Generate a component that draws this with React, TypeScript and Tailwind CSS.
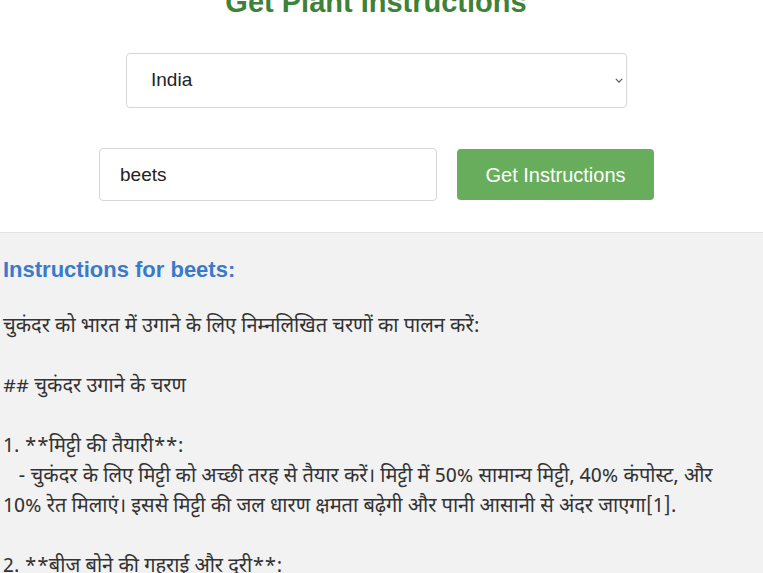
import { useState } from "react";

const text = `चुकंदर को भारत में उगाने के लिए निम्नलिखित चरणों का पालन करें:

## चुकंदर उगाने के चरण

1. **मिट्टी की तैयारी**:
   - चुकंदर के लिए मिट्टी को अच्छी तरह से तैयार करें। मिट्टी में 50% सामान्य मिट्टी, 40% कंपोस्ट, और 10% रेत मिलाएं। इससे मिट्टी की जल धारण क्षमता बढ़ेगी और पानी आसानी से अंदर जाएगा[1].

2. **बीज बोने की गहराई और दूरी**:`;

export default function App() {
  const [country, setCountry] = useState("India");
  const [plant, setPlant] = useState("beets");

  return (
    <div className="h-[573px] overflow-hidden bg-white font-['Liberation_Sans',Arial,sans-serif]">
      <div className="flex flex-col items-center pr-[11px]">
        <h1 className="-mt-[13px] h-[30px] text-[29px] font-bold leading-[30px] text-[#3d8238]">
          Get Plant Instructions
        </h1>

        <div className="relative mt-[36px] ml-[1px]">
          <select
            value={country}
            onChange={(e) => setCountry(e.target.value)}
            className="h-[55px] w-[501px] appearance-none rounded-[4px] border border-[#d6d6d6] bg-white pl-[24px] text-[19px] text-[#222] outline-none"
          >
            <option>India</option>
            <option>United States</option>
            <option>Canada</option>
          </select>
          <svg
            viewBox="0 0 10 6"
            className="pointer-events-none absolute right-[4px] top-[25px] h-[5px] w-[8px]"
            fill="none"
            stroke="#555"
            strokeWidth="1.4"
          >
            <path d="M1 1l4 4 4-4" />
          </svg>
        </div>

        <div className="mt-[40px] flex items-center gap-[20px] pl-[1px]">
          <input
            value={plant}
            onChange={(e) => setPlant(e.target.value)}
            className="h-[53px] w-[338px] rounded-[4px] border border-[#d6d6d6] bg-white pl-[20px] text-[19px] text-[#222] outline-none"
          />
          <button className="h-[51px] w-[197px] rounded-[4px] bg-[#67ad5c] text-[20px] text-white">
            Get Instructions
          </button>
        </div>
      </div>

      <div className="mt-[31px] h-full border-t border-[#e2e2e2] bg-[#f2f2f2] pl-[3px] pr-[30px] pt-[23px]">
        <h2 className="text-[22px] font-bold leading-[28px] text-[#3a7acb]">
          Instructions for beets:
        </h2>
        <p className="mt-[28px] whitespace-pre-wrap font-['Noto_Sans_Devanagari','Noto_Sans',sans-serif] text-[20px] leading-[30px] text-[#333]">
          {text}
        </p>
      </div>
    </div>
  );
}
